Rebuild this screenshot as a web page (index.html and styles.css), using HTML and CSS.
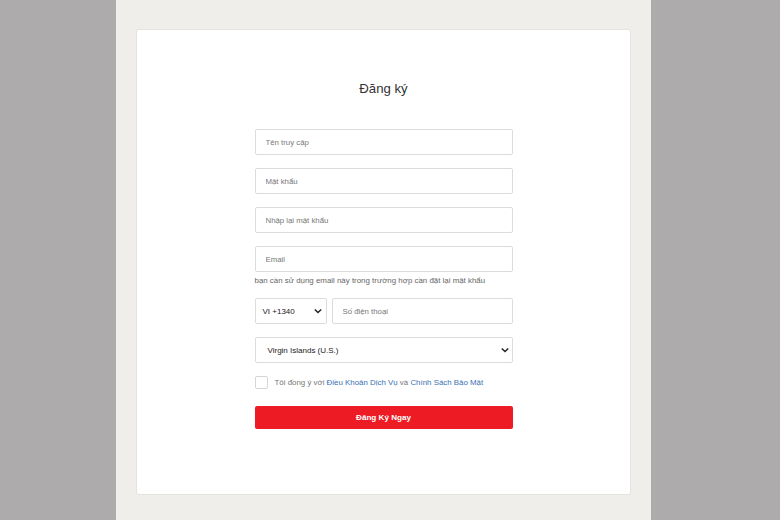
FILE: index.html
```html
<!DOCTYPE html>
<html lang="vi">
<head>
<meta charset="utf-8">
<title>Đăng ký</title>
<link rel="stylesheet" href="styles.css">
</head>
<body>
<div class="panel">
  <div class="card">
    <h1 class="title">Đăng ký</h1>
    <form class="form">
      <div class="field"><input class="input" type="text" placeholder="Tên truy cập"></div>
      <div class="field"><input class="input" type="password" placeholder="Mật khẩu"></div>
      <div class="field"><input class="input" type="password" placeholder="Nhập lại mật khẩu"></div>
      <div class="field field-email">
        <input class="input" type="email" placeholder="Email">
        <div class="hint">bạn cần sử dụng email này trong trường hợp cần đặt lại mật khẩu</div>
      </div>
      <div class="field phone-row">
        <div class="select code">
          <span>VI +1340</span>
          <svg class="chev" viewBox="0 0 10 6" width="8" height="6"><path d="M1 1l4 4 4-4" fill="none" stroke="#222" stroke-width="1.8"/></svg>
        </div>
        <input class="input phone" type="tel" placeholder="Số điện thoại">
      </div>
      <div class="field">
        <div class="select country">
          <span>Virgin Islands (U.S.)</span>
          <svg class="chev" viewBox="0 0 10 6" width="8" height="6"><path d="M1 1l4 4 4-4" fill="none" stroke="#222" stroke-width="1.8"/></svg>
        </div>
      </div>
      <label class="agree">
        <span class="box"></span>
        <span class="agree-text">Tôi đồng ý với <a class="link">Điều Khoản Dịch Vụ</a> và <a class="link">Chính Sách Bảo Mật</a></span>
      </label>
      <button class="submit" type="button">Đăng Ký Ngay</button>
    </form>
  </div>
</div>
</body>
</html>
```
FILE: styles.css
```css
* { box-sizing: border-box; }
html, body { margin: 0; padding: 0; }
body {
  background: #adabac;
  font-family: "Liberation Sans", Arial, sans-serif;
  height: 520px;
  overflow: hidden;
}
.panel {
  margin-left: 116px;
  width: 535px;
  height: 520px;
  background: #efeeea;
  padding: 29px 20px 0;
}
.card {
  background: #fff;
  border: 1px solid #e4e3df;
  border-radius: 3px;
  height: 466px;
  padding-top: 50px;
}
.title {
  margin: 0;
  text-align: center;
  font-size: 13.2px;
  font-weight: normal;
  color: #333;
  line-height: 18px;
}
.form {
  width: 258px;
  margin: 31px auto 0 auto;
}
.field { margin-bottom: 13px; }
.input {
  display: block;
  width: 100%;
  height: 26px;
  border: 1px solid #dcdcdc;
  border-radius: 2px;
  padding: 0 10px;
  font-family: inherit;
  font-size: 7.8px;
  color: #333;
  background: #fff;
  outline: none;
}
.input::placeholder { color: #777; }
.field-email { margin-bottom: 11px; }
.hint {
  font-size: 7.9px;
  color: #666;
  margin-top: 3px;
  line-height: 12px;
  white-space: nowrap;
}
.phone-row { display: flex; gap: 5px; }
.select {
  height: 26px;
  border: 1px solid #dcdcdc;
  border-radius: 2px;
  background: #fff;
  display: flex;
  align-items: center;
  justify-content: space-between;
  font-size: 8px;
  color: #222;
}
.code { width: 72px; flex: none; padding: 0 4px 0 7px; }
.phone { flex: 1; width: auto; }
.country { width: 100%; padding: 0 3px 0 12px; }
.chev { display: block; }
.agree {
  display: flex;
  align-items: center;
  gap: 7px;
  margin-top: -1px;
  height: 14px;
  margin-bottom: 17px;
}
.box {
  width: 13px;
  height: 13px;
  border: 1px solid #d6d6d6;
  border-radius: 2px;
  background: #fff;
  flex: none;
}
.agree-text { font-size: 7.9px; color: #777; }
.link { color: #3a6fb5; text-decoration: none; }
.submit {
  display: block;
  width: 100%;
  height: 23px;
  border: 0;
  border-radius: 2px;
  background: #ed1c24;
  color: #fff;
  font-family: inherit;
  font-size: 8.1px;
  font-weight: bold;
}
```
